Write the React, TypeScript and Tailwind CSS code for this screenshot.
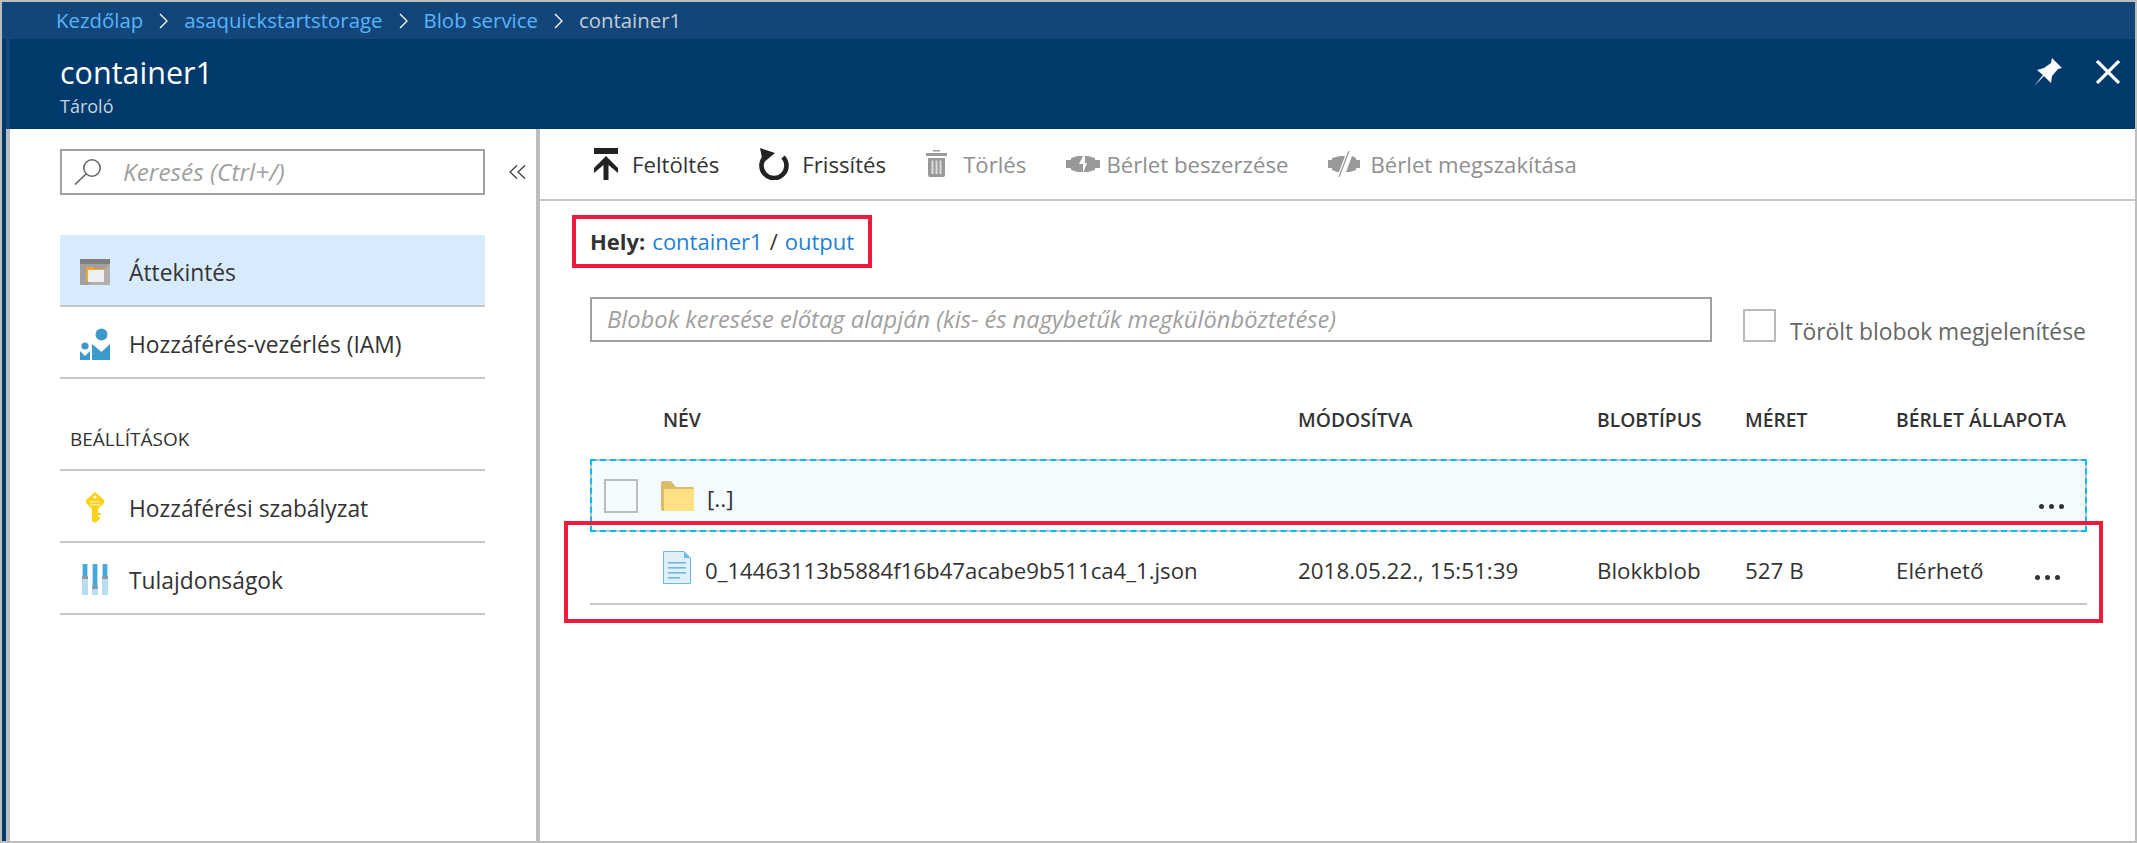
import { ReactNode } from "react";

const Chevron = ({ className = "" }: { className?: string }) => (
  <svg width="9" height="16" viewBox="0 0 9 16" fill="none" stroke="#ffffff" strokeWidth="1.3" className={className}>
    <polyline points="1,1 8,8 1,15" />
  </svg>
);

const UploadIcon = () => (
  <svg width="24" height="32" viewBox="0 0 24 32" fill="#222222" className="shrink-0">
    <rect x="0" y="0" width="24" height="6" />
    <polygon points="12,8 24,20 24,25 14.5,17 14.5,32 9.5,32 9.5,17 0,25 0,20" />
  </svg>
);

const RefreshIcon = () => (
  <svg width="30" height="32" viewBox="0 0 30 32" className="shrink-0">
    <path d="M24 9 A12.5 12.5 0 1 1 7 8" fill="none" stroke="#222222" strokeWidth="4.6" />
    <polygon points="1,0 16,5 4,15" fill="#222222" />
  </svg>
);

const TrashIcon = () => (
  <svg width="21" height="28" viewBox="0 0 21 28" className="shrink-0">
    <rect x="7" y="0" width="7" height="1.5" fill="#999999" />
    <rect x="0" y="3" width="21" height="3" fill="#999999" />
    <path d="M2 8h17v17a2 2 0 0 1-2 2H4a2 2 0 0 1-2-2z" fill="#999999" />
    <rect x="5.5" y="10.5" width="2" height="13.5" fill="#dddddd" />
    <rect x="9.5" y="10.5" width="2" height="13.5" fill="#dddddd" />
    <rect x="13.5" y="10.5" width="2" height="13.5" fill="#dddddd" />
  </svg>
);

const LeaseIcon = () => (
  <svg width="34" height="18" viewBox="0 0 34 18" className="shrink-0">
    <rect x="0" y="5" width="6" height="8" fill="#999999" />
    <rect x="28" y="5" width="6" height="8" fill="#999999" />
    <path d="M5 3 L12 1 H17 L13 9 H17 V17 H12 L5 15 Z" fill="#999999" />
    <path d="M29 3 L22 1 H19 V8 H21 L17.5 17 H22 L29 15 Z" fill="#999999" />
  </svg>
);

const BreakLeaseIcon = () => (
  <svg width="32" height="26" viewBox="0 0 32 26" className="shrink-0">
    <rect x="0" y="9" width="5" height="8" fill="#999999" />
    <rect x="27" y="9" width="5" height="8" fill="#999999" />
    <path d="M4 7 L12 5 H17 L11 21 H9 L4 19 Z" fill="#999999" />
    <path d="M28 7 L24 5 L18 21 H22 L28 19 Z" fill="#999999" />
    <line x1="21" y1="0" x2="11" y2="26" stroke="#999999" strokeWidth="1.2" />
  </svg>
);

const OverviewIcon = () => (
  <svg width="30" height="26" viewBox="0 0 30 26" className="shrink-0">
    <rect width="30" height="26" fill="#a0a0a0" />
    <polygon points="30,5 30,26 8,26" fill="#b0b0b0" />
    <rect width="30" height="5" fill="#7f7f7f" />
    <path d="M6 8h7l2 2h9v2H6z" fill="#f7a531" />
    <rect x="6" y="10" width="2" height="12" fill="#f7a531" />
    <rect x="8" y="11" width="16" height="12" fill="#efefef" />
  </svg>
);

const PeopleIcon = () => (
  <svg width="30" height="32" viewBox="0 0 30 32" fill="#3b9ac9" className="shrink-0">
    <circle cx="21.5" cy="6.5" r="6" />
    <path d="M12 16 L21.5 24 L30 16 V32 H12 Z" />
    <circle cx="5" cy="18" r="3.6" />
    <path d="M0 23 L5 28 L10 23 V32 H0 Z" />
  </svg>
);

const KeyIcon = () => (
  <svg width="20" height="32" viewBox="0 0 20 32" className="shrink-0">
    <path d="M10 0 L19 8 V11 L13 17 V21 H16 V23 H13 V25 H15 V27 L10 31 L7 29 V17 L1 11 V8 Z" fill="#fcd116" />
    <circle cx="10" cy="5" r="1.5" fill="#ffffff" />
    <rect x="5" y="9" width="10" height="1.4" fill="#fff1a6" />
    <rect x="5" y="12" width="10" height="1.4" fill="#fff1a6" />
  </svg>
);

const SlidersIcon = () => (
  <svg width="26" height="31" viewBox="0 0 26 31" className="shrink-0">
    {[
      { x: 0, knob: 12 },
      { x: 10, knob: 22 },
      { x: 20, knob: 12 },
    ].map((s) => (
      <g key={s.x}>
        <rect x={s.x} y="0" width="6" height="31" fill="#b8dcf0" />
        <rect x={s.x + 1} y="0" width="4" height={s.knob} fill="#45a8dc" />
        <rect x={s.x} y={s.knob} width="6" height="3" fill="#8d9aa3" />
      </g>
    ))}
  </svg>
);

const FolderIcon = () => (
  <svg width="33" height="30" viewBox="0 0 33 30" className="shrink-0">
    <path d="M0 2 Q0 0 2 0 H10 L15 6 H32 Q33 6 33 8 V30 H2 Q0 30 0 28 Z" fill="#d9bb6b" />
    <path d="M3 8 H33 V30 H3 Z" fill="#ffe083" />
  </svg>
);

const FileIcon = () => (
  <svg width="28" height="33" viewBox="0 0 28 33" className="shrink-0">
    <path d="M0.5 0.5 H21 L27.5 7 V32.5 H0.5 Z" fill="#dff0f8" stroke="#6fb9de" />
    <path d="M21 0.5 L27.5 7 H21 Z" fill="#6fb9de" />
    {[11, 16, 21, 26].map((y) => (
      <rect key={y} x="5" y={y} width={y === 26 ? 12 : 18} height="1.6" fill="#6fb9de" />
    ))}
  </svg>
);

const Dots = () => (
  <div className="flex gap-[5px]">
    <span className="w-[5px] h-[5px] rounded-full bg-[#333333]" />
    <span className="w-[5px] h-[5px] rounded-full bg-[#333333]" />
    <span className="w-[5px] h-[5px] rounded-full bg-[#333333]" />
  </div>
);

const ToolButton = ({ icon, label, gap, disabled }: { icon: ReactNode; label: string; gap: string; disabled?: boolean }) => (
  <div className={`flex items-center ${gap} ${disabled ? "text-[#8f8f8f]" : "text-[#333333]"}`}>
    {icon}
    <span className="whitespace-nowrap mt-[1px]">{label}</span>
  </div>
);

const NavItem = ({ icon, label, active }: { icon: ReactNode; label: string; active?: boolean }) => (
  <div className={`h-[72px] pt-[3px] flex items-center border-b-2 border-[#c8c8c8] ${active ? "bg-[#d8ebfc]" : ""}`}>
    <div className="w-[69px] flex justify-center shrink-0 pl-[1px]">{icon}</div>
    <span className="text-[22.8px] mt-[3px] text-[#333333]">{label}</span>
  </div>
);

export default function App() {
  return (
    <div className="w-[2137px] h-[843px] box-border border-2 border-[#bdbdbd] bg-white flex flex-col overflow-hidden font-['Open_Sans','Noto_Sans',sans-serif]">
      {/* breadcrumb */}
      <div className="h-[37px] shrink-0 bg-[#12467a] pl-[54px] flex items-center text-[20.4px] text-[#59b4f9]">
        <span>Kezdőlap</span>
        <Chevron className="mx-[16px]" />
        <span>asaquickstartstorage</span>
        <Chevron className="mx-[16px]" />
        <span>Blob service</span>
        <Chevron className="mx-[16px]" />
        <span className="text-[#c3ccd6]">container1</span>
      </div>

      <div className="flex-1 flex min-h-0">
        <div className="w-[4px] shrink-0 bg-[#003a6c]" />
        <div className="flex-1 flex flex-col min-w-0">
          {/* blade header */}
          <div className="h-[90px] shrink-0 bg-[#003a6c] border-l-4 border-[#12467a] pl-[50px] pr-[15px] flex items-center justify-between">
            <div className="text-white">
              <div className="text-[30.5px] leading-[40px]">container1</div>
              <div className="text-[18px] leading-[22px] mt-[3px] text-[#c8d4e0]">Tároló</div>
            </div>
            <div className="flex items-center gap-[34px] -mt-[24px]">
              <svg width="28" height="28" viewBox="0 0 28 28" fill="#ffffff">
                <path d="M18 0 L28 10 L24 11 L18 18 L17 25 L10 18 L0 28 L9 17 L3 12 L10 10 L17 5 Z" />
              </svg>
              <svg width="24" height="24" viewBox="0 0 24 24" stroke="#ffffff" strokeWidth="3.2">
                <line x1="1" y1="1" x2="23" y2="23" />
                <line x1="23" y1="1" x2="1" y2="23" />
              </svg>
            </div>
          </div>

          <div className="flex-1 flex min-h-0 border-l-4 border-[#bdbdbd]">
            {/* left menu */}
            <div className="w-[530px] shrink-0 border-r-4 border-[#bdbdbd] pl-[50px] pt-[20px]">
              <div className="flex items-center">
                <div className="w-[425px] h-[46px] border-2 border-[#a0a0a0] flex items-center shrink-0">
                  <svg width="28" height="26" viewBox="0 0 28 26" fill="none" stroke="#666666" strokeWidth="1.6" className="ml-[12px]">
                    <circle cx="18" cy="9" r="8.2" />
                    <line x1="12" y1="15" x2="1" y2="25.5" />
                  </svg>
                  <span className="ml-[21px] text-[24.4px] italic text-[#a0a0a0]">Keresés (Ctrl+/)</span>
                </div>
                <svg width="17" height="14" viewBox="0 0 17 14" fill="none" stroke="#444444" strokeWidth="1.4" className="ml-[24px]">
                  <polyline points="8,0.5 1,7 8,13.5" />
                  <polyline points="16,0.5 9,7 16,13.5" />
                </svg>
              </div>
              <div className="mt-[40px] w-[425px]">
                <NavItem icon={<OverviewIcon />} label="Áttekintés" active />
                <NavItem icon={<PeopleIcon />} label="Hozzáférés-vezérlés (IAM)" />
                <div className="h-[92px] flex items-end pb-[16px] pl-[10px] border-b-2 border-[#c8c8c8] text-[19px] font-medium text-[#333333]">
                  BEÁLLÍTÁSOK
                </div>
                <NavItem icon={<KeyIcon />} label="Hozzáférési szabályzat" />
                <NavItem icon={<SlidersIcon />} label="Tulajdonságok" />
              </div>
            </div>

            {/* main */}
            <div className="flex-1 min-w-0">
              <div className="h-[72px] border-b-2 border-[#c8c8c8] pl-[54px] flex items-center gap-[40px] text-[22.2px]">
                <ToolButton icon={<UploadIcon />} label="Feltöltés" gap="gap-[14px]" />
                <ToolButton icon={<RefreshIcon />} label="Frissítés" gap="gap-[13px]" />
                <ToolButton icon={<TrashIcon />} label="Törlés" gap="gap-[16px]" disabled />
                <ToolButton icon={<LeaseIcon />} label="Bérlet beszerzése" gap="gap-[6px]" disabled />
                <ToolButton icon={<BreakLeaseIcon />} label="Bérlet megszakítása" gap="gap-[10px]" disabled />
              </div>

              <div className="ml-[32px] mt-[14px] w-[300px] h-[53px] box-border border-4 border-[#ed1c3c] pl-[14px] flex items-center text-[22px] text-[#333333]">
                <span className="font-bold">Hely:</span>
                <span className="ml-[7px] text-[#1b81d8]">container1</span>
                <span className="mx-[7px]">/</span>
                <span className="text-[#1b81d8]">output</span>
              </div>

              <div className="ml-[50px] mt-[29px] flex items-end">
                <div className="w-[1122px] h-[45px] border-2 border-[#a0a0a0] flex items-center pl-[15px] text-[23.7px] italic text-[#a0a0a0] whitespace-nowrap">
                  Blobok keresése előtag alapján (kis- és nagybetűk megkülönböztetése)
                </div>
                <div className="ml-[31px] w-[33px] h-[33px] border-2 border-[#bbbbbb]" />
                <span className="ml-[14px] text-[22.8px] leading-[20px] text-[#666666] whitespace-nowrap">Törölt blobok megjelenítése</span>
              </div>

              <div className="ml-[50px] w-[1497px] mt-[48px] h-[60px] mb-[9px] grid grid-cols-[73px_635px_299px_148px_151px_1fr] items-center text-[19.3px] font-semibold text-[#333333]">
                <span />
                <span>NÉV</span>
                <span>MÓDOSÍTVA</span>
                <span>BLOBTÍPUS</span>
                <span>MÉRET</span>
                <span>BÉRLET ÁLLAPOTA</span>
              </div>

              <div className="relative ml-[50px] w-[1497px]">
                <div className="relative h-[73px] box-border border-2 border-[#c4c4c4] bg-[#f4fbfe] flex items-center">
                  <div className="absolute -inset-[2px] border-2 border-dashed border-[#00bcf2]" />
                  <div className="ml-[12px] w-[34px] h-[34px] border-2 border-[#bbbbbb]" />
                  <div className="ml-[23px]"><FolderIcon /></div>
                  <span className="ml-[13px] text-[22.5px] text-[#333333] mt-[6px]">[..]</span>
                  <div className="ml-auto mr-[21px] mt-[22px]"><Dots /></div>
                </div>
                <div className="h-[73px] box-border border-b-2 border-[#c8c8c8] grid grid-cols-[73px_635px_299px_148px_151px_140px_1fr] items-center text-[22.4px] text-[#333333]">
                  <span />
                  <div className="flex items-center gap-[14px] font-medium">
                    <FileIcon />
                    <span className="mt-[6px] text-[22.2px] whitespace-nowrap">0_14463113b5884f16b47acabe9b511ca4_1.json</span>
                  </div>
                  <span className="mt-[6px] whitespace-nowrap">2018.05.22., 15:51:39</span>
                  <span className="mt-[6px]">Blokkblob</span>
                  <span className="mt-[6px]">527 B</span>
                  <span className="mt-[6px]">Elérhető</span>
                  <div className="mt-[20px] -ml-[1px]"><Dots /></div>
                </div>
                {/* red highlight box */}
                <div className="absolute left-[-26px] top-[62px] w-[1539px] h-[102px] box-border border-4 border-[#ed1c3c] pointer-events-none" />
              </div>
            </div>
          </div>
        </div>
      </div>
    </div>
  );
}
